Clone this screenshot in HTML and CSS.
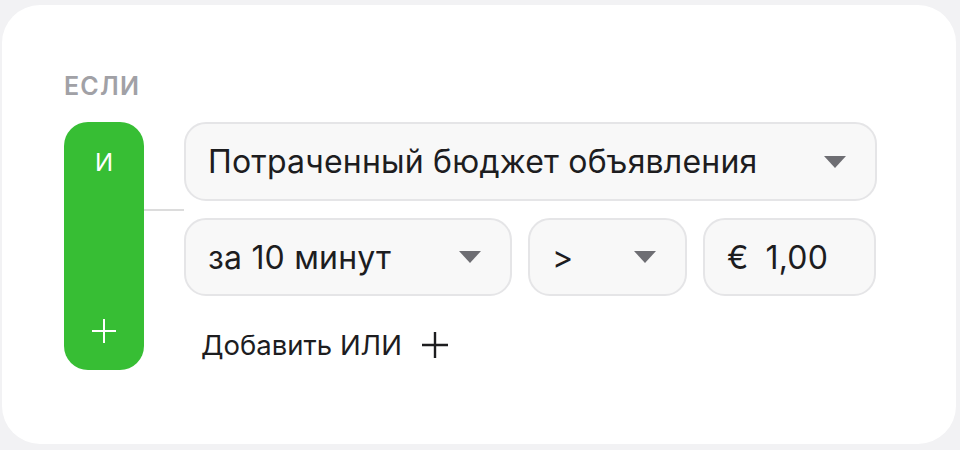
FILE: index.html
```html
<!DOCTYPE html>
<html lang="ru">
<head>
<meta charset="utf-8">
<link rel="stylesheet" href="styles.css">
</head>
<body>
<div class="card">
  <div class="label">ЕСЛИ</div>
  <div class="group">
    <div class="pill">
      <span class="pill-and">И</span>
      <svg class="pill-plus" width="26" height="26" viewBox="0 0 26 26"><path d="M13 1v24M1 13h24" stroke="#fff" stroke-width="2" fill="none"/></svg>
    </div>
    <div class="connector"><div class="line"></div></div>
    <div class="rules">
      <div class="field wide">
        <span class="text">Потраченный бюджет объявления</span>
        <span class="caret"></span>
      </div>
      <div class="row">
        <div class="field period">
          <span class="text">за 10 минут</span>
          <span class="caret"></span>
        </div>
        <div class="field op">
          <span class="text">&gt;</span>
          <span class="caret"></span>
        </div>
        <div class="field amount">
          <span class="text"><span class="cur">€</span>1,00</span>
        </div>
      </div>
      <div class="add">
        <span>Добавить ИЛИ</span>
        <svg width="26" height="26" viewBox="0 0 26 26"><path d="M13 0v26M0 13h26" stroke="#1d1d1f" stroke-width="2.4" fill="none"/></svg>
      </div>
    </div>
  </div>
</div>
</body>
</html>
```

FILE: styles.css
```css
* { box-sizing: border-box; }
html, body { margin: 0; padding: 0; }
body {
  background: #f2f2f4;
  width: 960px;
  height: 450px;
  overflow: hidden;
  font-family: Inter, "Noto Sans", sans-serif;
  color: #1d1d1f;
  padding: 5px 4px 6px 2px;
}
.card {
  background: #fff;
  height: 439px;
  border-radius: 38px;
  padding: 66px 0 0 62px;
}
.label {
  font-size: 25px;
  font-weight: 600;
  color: #a1a1a6;
  line-height: 30px;
  letter-spacing: 1.2px;
}
.group {
  display: flex;
  margin-top: 21px;
}
.pill {
  width: 80px;
  height: 248px;
  background: #37be34;
  border-radius: 24px;
  display: flex;
  flex-direction: column;
  align-items: center;
  justify-content: space-between;
  padding: 26px 0 26px;
}
.pill-and {
  color: #fff;
  font-size: 24px;
  line-height: 30px;
}
.connector {
  width: 40px;
  padding-top: 87px;
}
.line {
  height: 2px;
  background: #dcdcdc;
}
.rules {
  width: 693px;
  display: flex;
  flex-direction: column;
  gap: 17px;
}
.row {
  display: flex;
  gap: 16px;
}
.field {
  height: 79px;
  border: 2px solid #e5e5e7;
  border-radius: 22px;
  background: #f8f8f8;
  display: flex;
  align-items: center;
  justify-content: space-between;
  padding: 0 29px 0 22px;
  font-size: 32px;
  letter-spacing: 0.2px;
}
.row .field { height: 78px; }
.period { width: 328px; }
.op { width: 159px; }
.amount { width: 173px; }
.caret {
  width: 0;
  height: 0;
  border-left: 11px solid transparent;
  border-right: 11px solid transparent;
  border-top: 12px solid #6e6e73;
}
.cur { margin-right: 17px; }
.add {
  display: flex;
  align-items: center;
  gap: 20px;
  padding-left: 17px;
  font-size: 27.5px;
  line-height: 34px;
  margin-top: 15px;
}
```
